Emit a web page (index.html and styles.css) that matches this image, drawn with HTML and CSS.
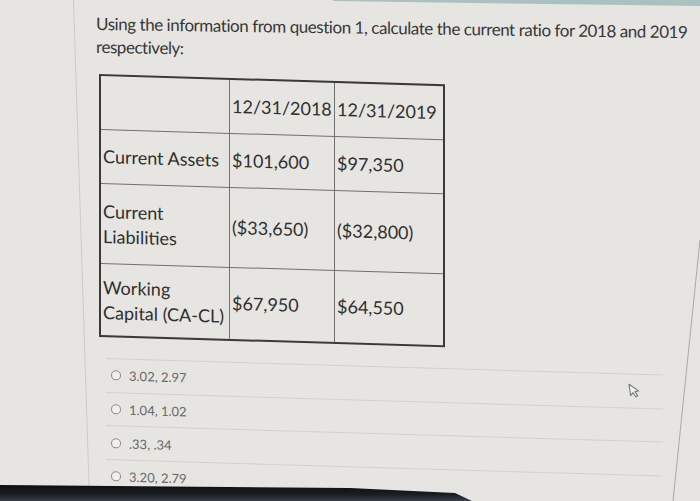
FILE: index.html
```html
<!DOCTYPE html>
<html lang="en">
<head>
<meta charset="utf-8">
<title>Current ratio question</title>
<link rel="stylesheet" href="styles.css">
</head>
<body>
<main class="page">
  <p class="question">Using the information from question 1, calculate the current ratio for 2018 and 2019 respectively:</p>

  <div class="data" role="table">
    <div class="cell c1 r1"></div>
    <div class="cell c2 r1">12/31/2018</div>
    <div class="cell c3 r1">12/31/2019</div>

    <div class="cell c1 r2">Current Assets</div>
    <div class="cell c2 r2">$101,600</div>
    <div class="cell c3 r2">$97,350</div>

    <div class="cell c1 r3">Current<br>Liabilities</div>
    <div class="cell c2 r3">($33,650)</div>
    <div class="cell c3 r3">($32,800)</div>

    <div class="cell c1 r4">Working<br>Capital (CA-CL)</div>
    <div class="cell c2 r4">$67,950</div>
    <div class="cell c3 r4">$64,550</div>
  </div>

  <ul class="options">
    <li class="option"><span class="radio"></span><span>3.02, 2.97</span></li>
    <li class="option"><span class="radio"></span><span>1.04, 1.02</span></li>
    <li class="option"><span class="radio"></span><span>.33, .34</span></li>
    <li class="option"><span class="radio"></span><span>3.20, 2.79</span></li>
  </ul>
</main>

<svg class="frame" width="700" height="501" viewBox="0 0 700 501" aria-hidden="true">
  <polygon points="333,0 700,0 700,6 333,1" fill="#a9c1c1"/>
  <line x1="73.5" y1="0" x2="89.5" y2="501" stroke="#cdccc9" stroke-width="1"/>
  <line x1="700" y1="240" x2="673" y2="501" stroke="#a9a9a7" stroke-width="1"/>
</svg>

<svg class="cursor" width="14" height="18" viewBox="0 0 14 18" aria-hidden="true">
  <path d="M2 1.5 L2 13 L4.8 10.4 L7 15 L9 14 L6.9 9.6 L10.6 9.4 Z" fill="#f2f2f0" stroke="#7a7a78" stroke-width="1.1" stroke-linejoin="round"/>
</svg>

<div class="bezel"></div>
</body>
</html>
```

FILE: styles.css
```css
html, body {
  margin: 0;
  padding: 0;
}

body {
  width: 700px;
  height: 501px;
  overflow: hidden;
  position: relative;
  background: #e6e5e2;
  font-family: Lato, "Open Sans", sans-serif;
  color: #353535;
}

.page {
  padding-top: 13px;
}

.question {
  margin: 0 0 0 96px;
  width: 620px;
  font-size: 17px;
  line-height: 22.5px;
  letter-spacing: -0.45px;
  color: #373737;
  transform: skewY(0.8deg);
  transform-origin: 0 0;
}

.data {
  display: grid;
  grid-template-columns: 129px 105px 108px;
  grid-template-rows: 54px 54px 80px 71px;
  width: max-content;
  margin: 16px 0 0 99px;
  border: 2px solid #3a3a3a;
  font-size: 18px;
  line-height: 24.5px;
  color: #2f2f2f;
  transform: skewY(1.7deg);
  transform-origin: 0 0;
}

.cell {
  box-sizing: border-box;
  display: flex;
  flex-direction: column;
  justify-content: center;
  padding-left: 2px;
  white-space: nowrap;
  border-bottom: 1px solid #707070;
}

.cell.c1, .cell.c2 {
  border-right: 1px solid #707070;
}

.cell.r4 {
  border-bottom: none;
}

.options {
  list-style: none;
  margin: 21px 0 0 106px;
  padding: 0;
  width: 557px;
  transform: skewY(1.7deg);
  transform-origin: 0 0;
}

.option {
  box-sizing: border-box;
  display: flex;
  align-items: center;
  height: 33.7px;
  border-top: 1px solid #d2d1ce;
  padding-left: 5px;
  font-size: 13px;
  color: #686868;
}

.radio {
  width: 8px;
  height: 8px;
  border: 1px solid #8a8a8a;
  border-radius: 50%;
  margin-right: 8px;
  background: #f0efec;
}

.frame {
  position: absolute;
  left: 0;
  top: 0;
  pointer-events: none;
}

.cursor {
  position: absolute;
  left: 628px;
  top: 382px;
  transform: rotate(-8deg);
}

.bezel {
  position: absolute;
  left: 0;
  bottom: 0;
  width: 472px;
  height: 16px;
  background: linear-gradient(to bottom, #0c0d0f 0%, #1b1e22 60%, #3a3f47 100%);
  clip-path: polygon(0 0, 350px 3px, 455px 8px, 472px 16px, 0 16px);
}
```
